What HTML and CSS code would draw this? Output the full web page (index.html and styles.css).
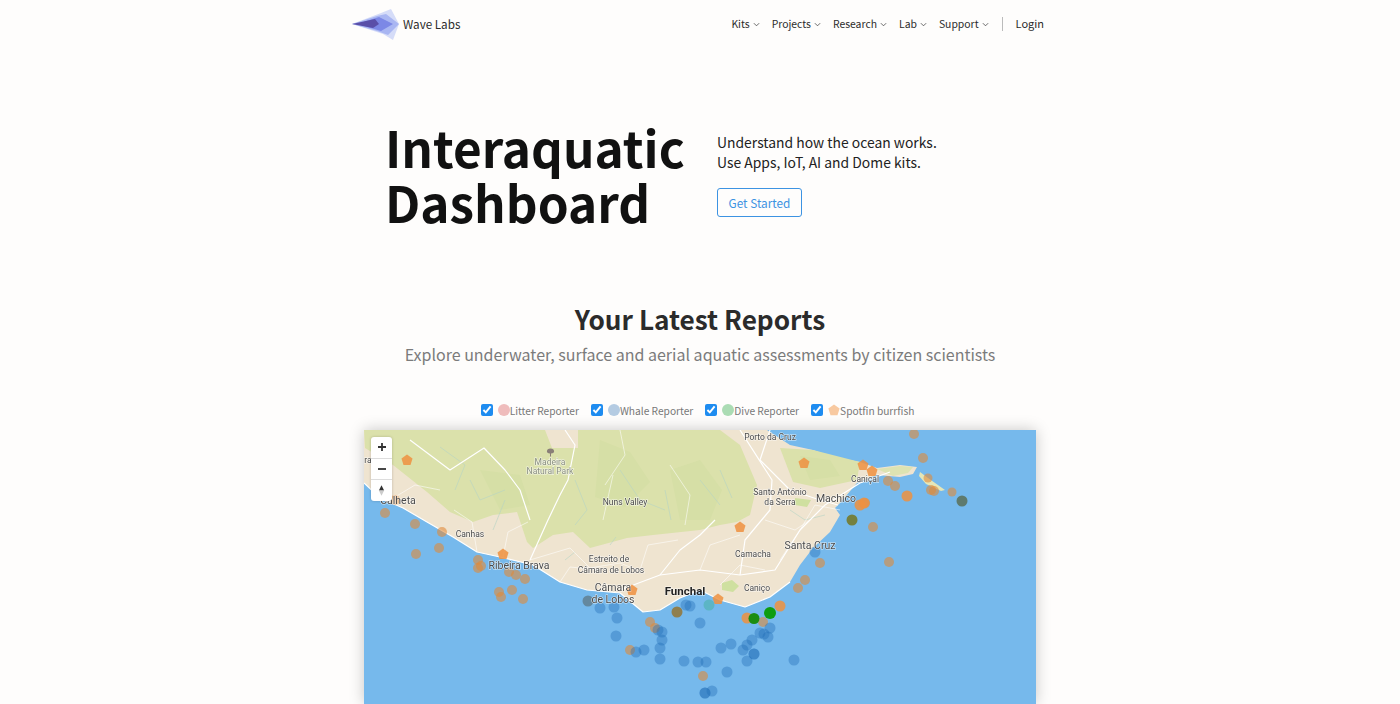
FILE: index.html
```html
<!DOCTYPE html>
<html>
	<head>
		<meta charset="utf-8" />
		<title>Wave Labs</title>
		<link rel="stylesheet" href="styles.css">
	</head>
	<body>
		<header class="topbar">
			<a class="brand">
				<svg class="brand-logo" viewBox="350 8 50 34">
					<polygon points="351,25 380,14 390,10 398,25 392,41 382,35" fill="#d5dcf8"/>
					<polygon points="351,25 376,17 385,15 398,25 387,36 376,32" fill="#a9b6f2"/>
					<polygon points="356,25 378,18 392,25 380,32" fill="#7c88e6"/>
					<polygon points="351,25 374,20 378,25 372,29" fill="#5a4fa8"/>
				</svg>
				<span>Wave Labs</span>
			</a>
			<nav class="menu">
				<a>Kits<svg class="caret" viewBox="0 0 8 5"><path d="M1 1l3 3 3-3"/></svg></a>
				<a>Projects<svg class="caret" viewBox="0 0 8 5"><path d="M1 1l3 3 3-3"/></svg></a>
				<a>Research<svg class="caret" viewBox="0 0 8 5"><path d="M1 1l3 3 3-3"/></svg></a>
				<a>Lab<svg class="caret" viewBox="0 0 8 5"><path d="M1 1l3 3 3-3"/></svg></a>
				<a>Support<svg class="caret" viewBox="0 0 8 5"><path d="M1 1l3 3 3-3"/></svg></a>
				<i class="menu-sep"></i>
				<a class="login">Login</a>
			</nav>
		</header>

		<section class="hero">
			<h1>Interaquatic<br>Dashboard</h1>
			<div class="hero-side">
				<p>Understand how the ocean works.<br>Use Apps, IoT, AI and Dome kits.</p>
				<a class="btn">Get Started</a>
			</div>
		</section>

		<section class="reports">
			<h2>Your Latest Reports</h2>
			<p class="sub">Explore underwater, surface and aerial aquatic assessments by citizen scientists</p>

			<div class="legend">
				<label><input type="checkbox" checked><i class="dot litter"></i>Litter Reporter</label>
				<label><input type="checkbox" checked><i class="dot whale"></i>Whale Reporter</label>
				<label><input type="checkbox" checked><i class="dot dive"></i>Dive Reporter</label>
				<label><input type="checkbox" checked><svg class="penta" viewBox="0 0 12 12"><polygon points="6,0.5 11.6,4.6 9.5,11.2 2.5,11.2 0.4,4.6"/></svg>Spotfin burrfish</label>
			</div>

			<div class="map">
				<svg class="map-art" viewBox="364 430 672 274">
					<rect x="364" y="430" width="672" height="274" fill="#76b9ec"/>
					<!--land-->
					<path fill="#efe4d0" d="M364 430H767L790 445 813 450 833 457 860 462 877 468 900 465 917 467 913 474 900 477 877 475 857 483 840 503 835 508 840 515 830 532 813 548 800 565 790 582 770 597 745 607 720 600 700 590 680 598 660 610 643 612 620 593 587 590 560 582 533 565 500 557 477 552 453 537 427 522 403 508 380 498 364 483Z"/>
					<path fill="#e4e6b8" d="M920 472L928 478 945 490 941 491 926 484 919 476Z"/>
					<!--green-->
					<path fill="#dbe1ab" d="M364 430H545L552 448 578 448 578 430H720L740 445 757 485 750 515 737 522 720 525 700 530 653 535 627 538 590 548 573 532 553 535 533 548 527 542 517 512 493 515 473 522 450 512 427 492 393 465 365 448Z"/>
					<path fill="#dbe1ab" d="M780 448L813 450 860 462 857 480 820 488 793 482Z"/>
					<path fill="#dde3b2" d="M877 469L900 466 913 467 908 473 893 476Z"/>
					<path fill="#cfe0a0" d="M722 583l10-3 7 6-6 6-11-2zM795 498l16 2-4 7-12-2z"/>
					<path fill="#d6dfa6" d="M600 440l30 12 20 30-25 25-30-10zM670 470l30-10 22 30-12 30-30 0zM480 470l40 5 10 30-30 5zM800 456l30 4 10 16-30 4z"/>
					<!--rivers-->
					<g class="rivers">
						<path d="M440 447l25 18-10 25M470 480l10 20 25-10M505 500l-12 30M575 480l12 30-12 15M620 470l20 30 25 10M665 490l6 30M700 480l20 25M610 545l6-8M565 560l10-8M790 510l15 10 20-5M720 470l12 28"/>
					</g>
					<!--roads-->
					<g class="roads">
						<path d="M364 483L380 498 403 508 427 522 453 537 477 552 500 557 533 565 560 582 587 590 620 593 643 612 660 610 680 598 700 590 720 600 745 607 770 597 790 582"/>
						<path d="M530 560L548 520 560 495 568 480 575 445 565 430"/>
						<path d="M410 440L450 470 484 448 505 470 520 490 530 520"/>
						<path d="M620 590L660 575 700 570 740 575 775 570 800 530 825 505 860 483 890 472"/>
						<path d="M770 430L760 460 790 490 820 500 838 505"/>
						<path d="M740 430L772 480 770 510 745 540 740 575"/>
						<path d="M660 575L680 550 700 535 715 520"/>
						<path class="minor" d="M530 560l40-12 20 20 30-5 25 10M640 570l8-25 30-5M700 570l10-25 30-10M720 585l20-20 25 5M560 582l10-15 30 3M477 552l-5-30-18-12M503 557l5-25 20-10M390 500l25-15 25 5M620 430l5 25-20 30M670 465l20 30-5 30M765 520l30 10 15-10M800 530l-20 30M840 510l-25-5-15 25M603 520l10-45"/>
					</g>
					<!--markers-->
					<g class="tan">
						<circle cx="914" cy="434" r="5"/><circle cx="923" cy="458" r="5"/><circle cx="928" cy="478" r="4.500"/>
						<circle cx="888" cy="481" r="5"/><circle cx="895" cy="486" r="5"/><circle cx="931" cy="490" r="5"/>
						<circle cx="934" cy="491" r="5"/><circle cx="952" cy="492" r="4.500"/><circle cx="873" cy="527" r="5"/>
						<circle cx="889" cy="562" r="5"/><circle cx="820" cy="563" r="5"/><circle cx="805" cy="580" r="5"/>
						<circle cx="798" cy="588" r="5"/><circle cx="763" cy="622" r="5"/><circle cx="703" cy="676" r="5"/>
						<circle cx="385" cy="513" r="5"/><circle cx="395" cy="500" r="5"/><circle cx="415" cy="524" r="5"/>
						<circle cx="442" cy="532" r="5"/><circle cx="416" cy="554" r="5"/><circle cx="439" cy="548" r="5"/>
						<circle cx="478" cy="560" r="5"/><circle cx="478" cy="568" r="5"/><circle cx="481" cy="566" r="5"/>
						<circle cx="509" cy="572" r="5"/><circle cx="516" cy="575" r="5"/><circle cx="525" cy="579" r="5"/>
						<circle cx="499" cy="592" r="5"/><circle cx="501" cy="597" r="5"/><circle cx="512" cy="590" r="5"/>
						<circle cx="523" cy="599" r="5"/><circle cx="650" cy="622" r="5"/><circle cx="655" cy="628" r="5"/>
						<circle cx="630" cy="650" r="5"/><circle cx="865" cy="503" r="5"/>
					</g>
					<g class="blue">
						<circle cx="600" cy="608" r="5.500"/><circle cx="614" cy="607" r="5.500"/><circle cx="617" cy="618" r="5.500"/>
						<circle cx="616" cy="636" r="5.500"/><circle cx="636" cy="652" r="5.500"/><circle cx="644" cy="650" r="5.500"/>
						<circle cx="660" cy="648" r="5.500"/><circle cx="660" cy="659" r="5.500"/><circle cx="662" cy="632" r="5.500"/>
						<circle cx="662" cy="640" r="5.500"/><circle cx="658" cy="630" r="5.500"/><circle cx="684" cy="661" r="5.500"/>
						<circle cx="698" cy="662" r="5.500"/><circle cx="706" cy="662" r="5.500"/><circle cx="690" cy="606" r="5.500"/>
						<circle cx="686" cy="605" r="5.500"/><circle cx="700" cy="623" r="5.500"/><circle cx="721" cy="648" r="5.500"/>
						<circle cx="731" cy="644" r="5.500"/><circle cx="743" cy="650" r="5.500"/><circle cx="747" cy="645" r="5.500"/>
						<circle cx="752" cy="640" r="5.500"/><circle cx="754" cy="654" r="5.500"/><circle cx="754" cy="654" r="5.500"/>
						<circle cx="747" cy="661" r="5.500"/><circle cx="760" cy="633" r="5.500"/><circle cx="764" cy="634" r="5.500"/>
						<circle cx="768" cy="637" r="5.500"/><circle cx="770" cy="628" r="5.500"/><circle cx="794" cy="660" r="5.500"/>
						<circle cx="727" cy="672" r="5.500"/><circle cx="705" cy="693" r="5.500"/><circle cx="705" cy="693" r="5.500"/>
						<circle cx="712" cy="691" r="5.500"/><circle cx="815" cy="552" r="5.500"/>
					</g>
					<g class="orange">
						<polygon points="407,454.500 412.500,458.500 410.500,465 403.500,465 401.500,458.500"/><polygon points="503,548.500 508.500,552.500 506.500,559 499.500,559 497.500,552.500"/>
						<polygon points="632,584.500 637.500,588.500 635.500,595 628.500,595 626.500,588.500"/><polygon points="718,593.500 723.500,597.500 721.500,604 714.500,604 712.500,597.500"/>
						<polygon points="740,521.500 745.500,525.500 743.500,532 736.500,532 734.500,525.500"/><polygon points="804,457.500 809.500,461.500 807.500,468 800.500,468 798.500,461.500"/>
						<polygon points="863,459.500 868.500,463.500 866.500,470 859.500,470 857.500,463.500"/><polygon points="872,465.500 877.500,469.500 875.500,476 868.500,476 866.500,469.500"/>
						<circle cx="907" cy="496" r="5.500"/><circle cx="860" cy="505" r="5.500"/><circle cx="864" cy="503" r="5.500"/>
						<circle cx="780" cy="606" r="5.500"/><circle cx="747" cy="618" r="5.500"/>
					</g>
					<circle cx="962" cy="501" r="5.500" fill="#5e7a6e"/>
					<circle cx="852" cy="520" r="5.500" fill="#74803f"/>
					<circle cx="588" cy="601" r="5.500" fill="#64889f"/>
					<circle cx="709" cy="605" r="5.500" fill="#5cb5c5"/>
					<circle cx="677" cy="612" r="5.500" fill="#8f7f4f"/>
					<circle cx="754" cy="618.500" r="5.500" fill="#1c8d10"/>
					<circle cx="770" cy="613" r="6" fill="#0d9d10"/>
					<!--labels-->
					<g class="labels">
						<text x="770" y="440" class="s">Porto da Cruz</text>
						<text x="550" y="465" class="s park">Madeira</text>
						<text x="550" y="474" class="s park">Natural Park</text>
						<text x="625" y="505" class="s">Nuns Valley</text>
						<text x="780" y="495" class="s">Santo António</text>
						<text x="780" y="505" class="s">da Serra</text>
						<text x="865" y="482" class="s">Caniçal</text>
						<text x="836" y="502" class="m">Machico</text>
						<text x="810" y="549" class="m">Santa Cruz</text>
						<text x="753" y="557" class="s">Camacha</text>
						<text x="757" y="591" class="s">Caniço</text>
						<text x="470" y="537" class="s">Canhas</text>
						<text x="519" y="569" class="m">Ribeira Brava</text>
						<text x="609" y="562" class="s">Estreito de</text>
						<text x="611" y="573" class="s">Câmara de Lobos</text>
						<text x="613" y="591" class="m">Câmara</text>
						<text x="613" y="603" class="m">de Lobos</text>
						<text x="685" y="595" class="l">Funchal</text>
						<text x="398" y="504" class="m">Calheta</text>
						<text x="368" y="463" class="s">ra</text>
					</g>
					<path fill="#8a7f78" d="M547 451a3.500 2.500 0 0 1 7 0 3.500 2 0 0 1-3 2.500v3h-1v-3a3.500 2 0 0 1-3-2.500z"/>
				</svg>
				<div class="zoom-ctrl">
					<button class="zoom-btn">
						<svg viewBox="0 0 10 10"><path d="M5 1v8M1 5h8"/></svg>
					</button>
					<button class="zoom-btn">
						<svg viewBox="0 0 10 10"><path d="M1 5h8"/></svg>
					</button>
					<button class="zoom-btn">
						<svg class="compass" viewBox="0 0 8 14"><polygon points="4,1 7,7 1,7" fill="#333"/><polygon points="4,13 7,7 1,7" fill="#ccc"/></svg>
					</button>
				</div>
			</div>
		</section>
	</body>
</html>
```
FILE: styles.css
```css
*{
	padding: 0;
	margin: 0;
	box-sizing: border-box;
}
html,body{
	height: 704px;
	overflow: hidden;
}
body{
	background: #fefdfc;
	color: #2b2b2b;
	font-family: "Noto Sans CJK SC", "Noto Sans", sans-serif;
}
a{
	display: inline-flex;
	align-items: center;
}

/*top bar*/
.topbar{
	width: 700px;
	height: 50px;
	margin: 0 auto;
	padding: 0 6px 4px 1px;
	display: flex;
	justify-content: space-between;
	align-items: center;
}
.brand{
	font-size: 11.700px;
	gap: 2px;
}
.brand-logo{
	width: 50px;
	height: 34px;
	margin-top: 2px;
}
.menu{
	display: flex;
	align-items: center;
	font-size: 10.400px;
}
.menu a{
	margin-right: 12px;
}
.menu a.login{
	margin-right: 0;
	font-size: 11px;
}
.caret{
	width: 7px;
	height: 5px;
	margin-left: 3px;
	margin-top: 2px;
	fill: none;
	stroke: #444;
	stroke-width: .9;
}
.menu-sep{
	width: 1px;
	height: 14px;
	margin: 2px 13px 0 1px;
	background: #bbb;
}

/*hero*/
.hero{
	display: flex;
	padding: 69px 0 0 385px;
	height: 244px;
}
.hero h1{
	width: 332px;
	font-size: 49.500px;
	line-height: 55px;
	font-weight: 700;
	color: #111;
}
.hero-side p{
	font-size: 13.900px;
	line-height: 20px;
	margin-top: 13px;
	color: #222;
}
.btn{
	height: 29px;
	width: 85px;
	margin-top: 16px;
	justify-content: center;
	border: 1px solid #3d93e2;
	border-radius: 3px;
	color: #3d93e2;
	font-size: 11.800px;
}

/*reports*/
.reports{
	text-align: center;
}
.reports h2{
	font-size: 26.200px;
	line-height: 40px;
	font-weight: 700;
	margin-top: 5px;
	color: #2b2b2b;
}
.sub{
	font-size: 16px;
	line-height: 26px;
	color: #7b7b7b;
	margin-top: 2px;
}
.legend{
	display: flex;
	justify-content: center;
	gap: 12px;
	margin-top: 32px;
	padding-right: 5px;
	height: 22px;
	font-size: 10.200px;
	color: #777;
}
.legend label{
	display: flex;
	align-items: center;
}
.legend input{
	width: 12px;
	height: 12px;
	margin-right: 5px;
	accent-color: #1e8cf0;
}
.dot{
	width: 12px;
	height: 12px;
	border-radius: 50%;
}
.litter{
	background: #efbcbc;
}
.whale{
	background: #b4cbe2;
}
.dive{
	background: #abdcb4;
}
.penta{
	width: 12px;
	height: 12px;
	fill: #f8c9a0;
}

/*map*/
.map{
	position: relative;
	width: 672px;
	height: 274px;
	margin: 9px auto 0;
	box-shadow: 0 0 14px rgba(0,0,0,.22);
}
.map-art{
	display: block;
	width: 100%;
	height: 100%;
	filter: blur(.5px);
}
.roads path{
	fill: none;
	stroke: #fff;
	stroke-width: 1.200;
	stroke-linejoin: round;
}
.roads .minor{
	stroke-width: .7;
	opacity: .8;
}
.rivers path{
	fill: none;
	stroke: #b5d4c4;
	stroke-width: .6;
}
.tan circle{
	fill: #e08a3a;
	opacity: .6;
}
.blue circle{
	fill: #1f6db5;
	opacity: .38;
}
.orange polygon,.orange circle{
	fill: #ee913f;
	opacity: .85;
}
.labels text{
	font-family: Roboto, sans-serif;
	text-anchor: middle;
	fill: #4a4a4a;
	stroke: rgba(255,255,255,.7);
	stroke-width: 1.200px;
	paint-order: stroke;
}
.labels .s{
	font-size: 8.500px;
}
.labels .m{
	font-size: 10.500px;
}
.labels .l{
	font-size: 11.500px;
	font-weight: 700;
	fill: #222;
}
.labels .park{
	fill: #8a8f80;
}
.zoom-ctrl{
	position: absolute;
	left: 7px;
	top: 7px;
	width: 21px;
	height: 64px;
	background: #fff;
	border-radius: 3px;
	box-shadow: 0 0 3px rgba(0,0,0,.2);
	display: flex;
	flex-direction: column;
}
.zoom-btn{
	flex: 1;
	border: 0;
	background: none;
	border-bottom: 1px solid #ddd;
	display: flex;
	align-items: center;
	justify-content: center;
}
.zoom-btn:last-child{
	border-bottom: 0;
}
.zoom-btn svg{
	width: 10px;
	height: 10px;
	stroke: #333;
	stroke-width: 1.800;
	fill: none;
}
.zoom-btn .compass{
	width: 7px;
	height: 13px;
	stroke: none;
}
```
